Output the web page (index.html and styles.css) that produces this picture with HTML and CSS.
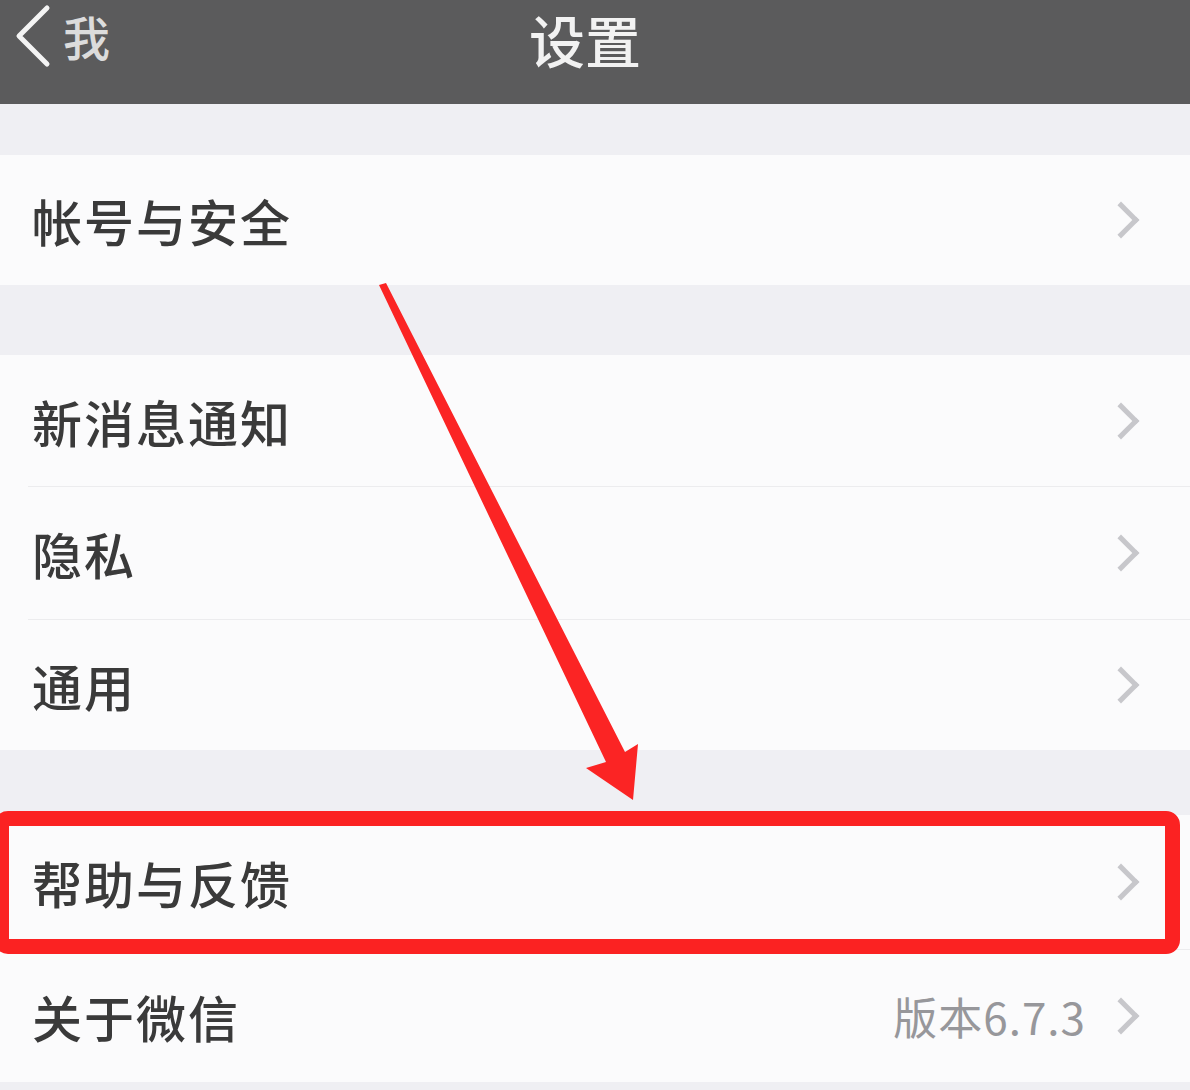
FILE: index.html
```html
<!DOCTYPE html>
<html lang="zh-CN">
<head>
<meta charset="utf-8">
<title>设置</title>
<link rel="stylesheet" href="styles.css">
</head>
<body>
<div class="screen">
  <header class="nav">
    <div class="nav-left">
      <svg class="back" width="40" height="64" viewBox="0 0 40 64"><polyline points="34,4 6,32 34,60" fill="none" stroke="#f4f4f4" stroke-width="5" stroke-linecap="round" stroke-linejoin="round"/></svg>
      <span class="back-text">我</span>
    </div>
    <h1 class="nav-title">设置</h1>
    <div class="nav-right"></div>
  </header>

  <div class="gap gap1"></div>
  <section class="group">
    <div class="row h130 last"><span class="label">帐号与安全</span><span class="chev"></span></div>
  </section>

  <div class="gap gap2"></div>
  <section class="group">
    <div class="row h132"><span class="label">新消息通知</span><span class="chev"></span></div>
    <div class="row h133"><span class="label">隐私</span><span class="chev"></span></div>
    <div class="row h130 last"><span class="label">通用</span><span class="chev"></span></div>
  </section>

  <div class="gap gap3"></div>
  <section class="group">
    <div class="row h135"><span class="label">帮助与反馈</span><span class="chev"></span></div>
    <div class="row h132 last"><span class="label">关于微信</span><span class="value">版本6.7.3</span><span class="chev"></span></div>
  </section>
  <div class="gap gap4"></div>

  <div class="highlight"></div>
  <svg class="arrow" width="1190" height="1090" viewBox="0 0 1190 1090">
    <polygon points="379,285 386,283 625,752 638,744 633,800 586,768 606,762" fill="#fb2424"/>
  </svg>
</div>
</body>
</html>
```
FILE: styles.css
```css
* { box-sizing: border-box; }
html, body { margin: 0; padding: 0; }
body {
  background: #efeff3;
  font-family: "Noto Sans CJK SC", "Noto Sans", sans-serif;
}
.screen {
  position: relative;
  width: 1190px;
  height: 1090px;
  overflow: hidden;
  background: #efeff3;
}
.nav {
  height: 104px;
  background: #5b5b5c;
  display: grid;
  grid-template-columns: 1fr auto 1fr;
  align-items: start;
  padding-right: 20px;
}
.nav-left {
  height: 72px;
  display: flex;
  align-items: center;
  padding-left: 13px;
  gap: 10px;
}
.back { display: block; }
.back-text {
  color: #dcdcdc;
  font-size: 47px;
  line-height: 1.2;
  font-weight: 500;
}
.nav-title {
  margin: 0;
  padding: 4px 4px 0;
  color: #f2f2f2;
  font-size: 56px;
  line-height: 70px;
  font-weight: 500;
  white-space: nowrap;
}
.gap1 { height: 51px; }
.gap2 { height: 70px; }
.gap3 { height: 65px; }
.gap4 { height: 8px; }
.group { background: #fbfbfc; }
.row {
  display: flex;
  align-items: center;
  margin-left: 28px;
  padding-left: 4px;
  padding-right: 50px;
  border-bottom: 1px solid #ececee;
}
.row.last { border-bottom: none; }
.h130 { height: 130px; }
.h132 { height: 132px; }
.h133 { height: 133px; }
.h135 { height: 135px; }
.label {
  flex: 1;
  color: #3a3a3a;
  font-size: 50px;
  line-height: 1.2;
  letter-spacing: 2px;
  font-weight: 500;
}
.value {
  color: #97979b;
  font-size: 44px;
  line-height: 1.2;
  letter-spacing: 1px;
  margin-right: 22px;
}
.chev {
  width: 26px;
  height: 26px;
  border-top: 5px solid #c7c7cb;
  border-right: 5px solid #c7c7cb;
  transform: rotate(45deg);
  margin-right: 6px;
}
.highlight {
  position: absolute;
  left: -6px;
  top: 811px;
  width: 1186px;
  height: 143px;
  border: 15px solid #fb2222;
  border-radius: 14px;
}
.arrow {
  position: absolute;
  left: 0;
  top: 0;
  pointer-events: none;
}
```
